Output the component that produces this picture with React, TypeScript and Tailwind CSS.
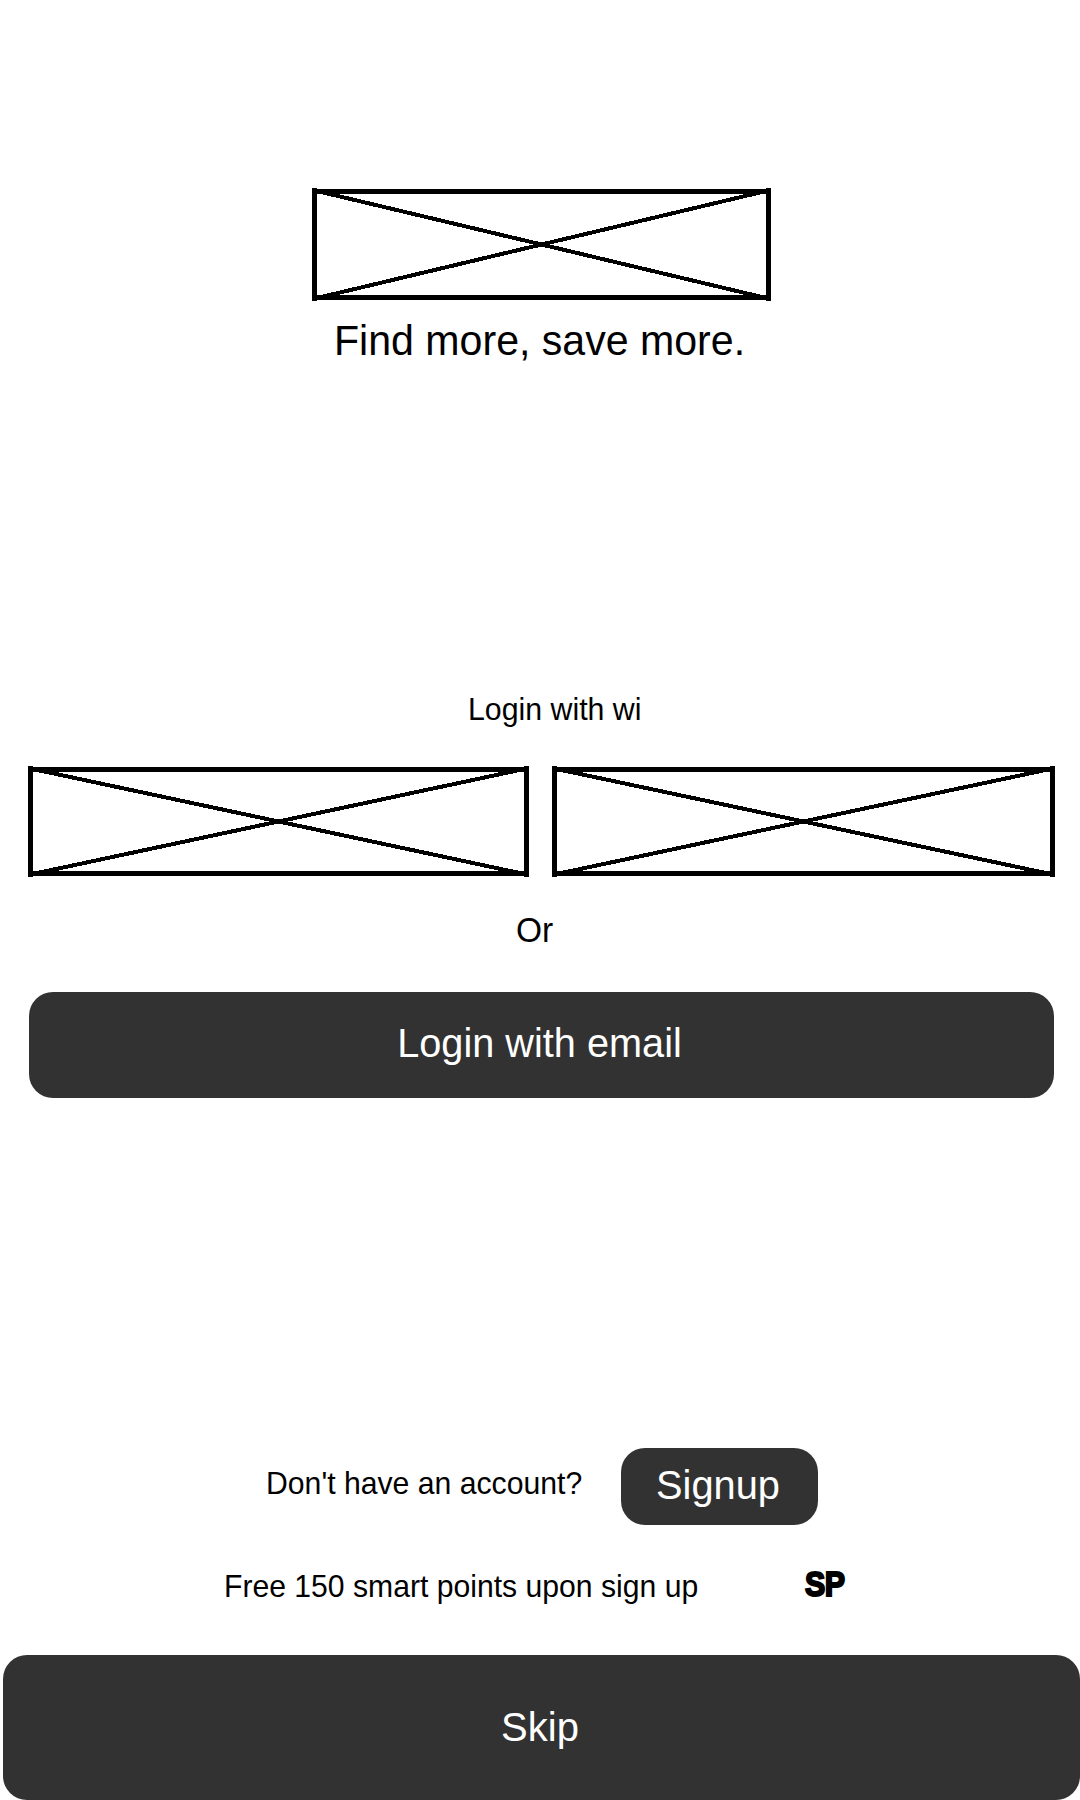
type PlaceholderProps = { width: number; height: number };

function Placeholder({ width, height }: PlaceholderProps) {
  const right = width - 2.5;
  const bottom = height - 4.5;
  return (
    <svg
      className="block shrink-0"
      width={width}
      height={height}
      viewBox={`0 0 ${width} ${height}`}
      fill="none"
      stroke="black"
      shapeRendering="crispEdges"
      aria-hidden="true"
    >
      <path d={`M7 4.5L${width - 7} ${bottom}M${width - 7} 4.5L7 ${bottom}`} strokeWidth="4" />
      <path d={`M0 4.5H${width}M0 ${bottom}H${width}`} strokeWidth="5" />
      <path d={`M2.5 1V${height - 1}M${right} 1V${height - 1}`} strokeWidth="5" />
    </svg>
  );
}

export default function App() {
  return (
    <main
      className="flex h-[1800px] w-[1080px] flex-col overflow-hidden bg-white pt-[187px] text-black"
      style={{ fontFamily: '"Liberation Sans", Arial, sans-serif' }}
    >
      <header className="flex flex-col pl-[312px]">
        <Placeholder width={459} height={115} />
        <h1 className="mt-[15px] ml-[22px] origin-[0_80%] scale-y-[1.03] text-[41.1px] leading-[48px] whitespace-nowrap">
          Find more, save more.
        </h1>
      </header>

      <section className="mt-[327px] flex flex-col">
        <p className="ml-[468px] origin-[0_80%] scale-y-[1.02] text-[30.3px] leading-[36px]">Login with wi</p>
        <div className="mt-[37px] ml-[28px] flex gap-[23px]">
          <Placeholder width={501} height={113} />
          <Placeholder width={503} height={113} />
        </div>
        <p className="mt-[33px] ml-[516px] origin-[0_80%] scale-y-[1.03] text-[33.5px] leading-[40px]">Or</p>
        <button className="mt-[41px] ml-[29px] flex h-[106px] w-[1025px] items-center justify-center rounded-3xl bg-[#323232] pr-[4px] pb-[3px] text-[39.7px] text-white">
          <span className="origin-[0_73%] scale-y-[1.03]">Login with email</span>
        </button>
      </section>

      <section className="mt-[350px] flex flex-col">
        <div className="flex h-[77px]">
          <p className="mt-[18px] ml-[266px] h-[36px] w-[355px] origin-[0_80%] scale-y-[1.02] text-[30.2px] leading-[36px]">
            Don't have an account?
          </p>
          <button className="flex w-[197px] items-center justify-center rounded-3xl bg-[#323232] pr-[3px] pb-px text-[39.8px] text-white">
            <span className="origin-[0_73%] scale-y-[1.03]">Signup</span>
          </button>
        </div>
        <div className="mt-[43px] flex h-[36px] leading-[36px]">
          <p className="ml-[224px] w-[581px] origin-[0_80%] translate-y-px scale-y-[1.02] text-[30.15px]">
            Free 150 smart points upon sign up
          </p>
          <span className="origin-[0_80%] -translate-y-px scale-x-[0.92] scale-y-[1.08] text-[33px] font-bold tracking-[-0.5px] [-webkit-text-stroke:2px_black]">
            SP
          </span>
        </div>
      </section>

      <button className="mt-[51px] ml-[3px] flex h-[145px] w-[1077px] items-center justify-center rounded-3xl bg-[#323232] pr-[3px] pb-[2px] text-[40px] text-white">
        <span className="origin-[0_73%] scale-y-[1.03]">Skip</span>
      </button>
    </main>
  );
}
